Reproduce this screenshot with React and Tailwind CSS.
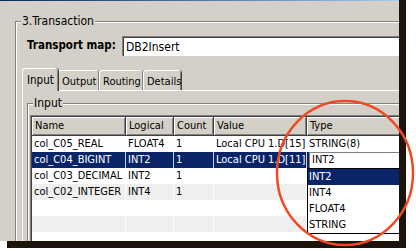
const font = "font-['DejaVu_Sans_Condensed','Liberation_Sans',sans-serif]";

const cols = ["w-[94px]", "w-[48px]", "w-[40px]", "w-[93px]", "w-[110px]"];
const heads = ["Name", "Logical", "Count", "Value", "Type"];

const rows = [
	["col_C05_REAL", "FLOAT4", "1", "Local CPU 1.D[15]", "STRING(8)"],
	["col_C04_BIGINT", "INT2", "1", "Local CPU 1.D[11]", "combo"],
	["col_C03_DECIMAL", "INT2", "1", "", ""],
	["col_C02_INTEGER", "INT4", "1", "", ""],
	["", "", "", "", ""],
	["", "", "", "", ""],
	["", "", "", "", ""],
];

const tabs = [
	["Output", "w-[41px]"],
	["Routing", "w-[44px]"],
	["Details", "w-[38px]"],
];

function Row({ cells, index }) {
	const selected = index === 1;
	const bg = selected ? "bg-[#0a246a] text-white" : index % 2 === 1 ? "bg-[#efefef]" : "bg-white";
	return (
		<div className={`flex h-[16px] ${bg}`}>
			{cells.map((c, i) => (
				<div key={i} className={`${cols[i]} shrink-0 h-full border-r border-white/80 flex items-center pl-[2px] whitespace-nowrap overflow-hidden`}>
					{c === "combo" ? (
						<div className="h-full w-full bg-white text-black border-t border-l border-[#808080] flex items-center pl-[2px]">INT2</div>
					) : (
						c
					)}
				</div>
			))}
		</div>
	);
}

export default function App() {
	return (
		<div className={`w-[416px] h-[251px] bg-white relative overflow-hidden text-black ${font}`}>
			<div className="w-[399px] h-[241px] bg-[#d4d0c8] overflow-hidden shadow-[7px_7px_0_#1c130b,7px_0_0_#1c130b]">
				<div className="h-px bg-gradient-to-r from-[#0a246a] to-[#a6caf0]"></div>

				{/* 3.Transaction group */}
				<div className="ml-[15px] mt-[20px] w-[420px] h-[260px] border border-[#808080] shadow-[inset_1px_1px_0_#fff,1px_1px_0_#fff]">
					<div className="-mt-[8px] ml-[5px] px-px w-fit bg-[#d4d0c8] text-[12px] leading-[15px]">3.Transaction</div>

					<div className="flex items-center mt-[7px] ml-[11px]">
						<div className="w-[95px] shrink-0 font-bold text-[11.5px] whitespace-nowrap">Transport map:</div>
						<div className="h-[20px] w-[300px] shrink-0 bg-white border-t border-l border-[#808080] shadow-[inset_1px_1px_0_#404040] flex items-center pl-[3px] text-[12px]">
							DB2Insert
						</div>
					</div>

					{/* tabs */}
					<div className="flex items-end mt-[12px] ml-[6px] h-[22px] text-[11px] whitespace-nowrap">
						<div className="relative z-10 w-[36px] h-[23px] -mb-px bg-[#d4d0c8] border-l border-t border-white rounded-t-[3px] shadow-[inset_-1px_0_0_#808080,1px_0_0_#404040] pl-[4px] pt-[3px] text-[11.5px]">
							Input
						</div>
						{tabs.map(([t, w]) => (
							<div key={t} className={`${w} shrink-0 h-[20px] border-l border-t border-white rounded-t-[3px] shadow-[inset_-1px_0_0_#808080,1px_0_0_#404040] pl-[3px] pt-[3px] overflow-hidden`}>
								{t}
							</div>
						))}
					</div>

					{/* tab panel */}
					<div className="ml-[6px] h-[200px] border-t border-l border-white">
						<div className="ml-[4px] mt-[12px] h-[200px] border border-[#808080] shadow-[inset_1px_1px_0_#fff,1px_1px_0_#fff]">
							<div className="-mt-[8px] ml-[5px] px-px w-fit bg-[#d4d0c8] text-[12px] leading-[15px]">Input</div>

							<div className="ml-[2px] mt-[4px] border-t border-l border-[#808080] shadow-[inset_1px_1px_0_#404040] pt-px pl-px text-[11px]">
								<div className="relative">
									<div className="flex h-[19px]">
										{heads.map((h, i) => (
											<div key={h} className={`${cols[i]} shrink-0 h-full bg-[#d4d0c8] border-r border-b border-[#404040] shadow-[inset_1px_1px_0_#fff,inset_-1px_-1px_0_#808080] flex items-center pl-[3px]`}>
												{h}
											</div>
										))}
									</div>
									{rows.map((r, i) => (
										<Row key={i} cells={r} index={i} />
									))}

									{/* dropdown list */}
									<div className="absolute left-[275px] top-[51px] w-[110px] bg-white border border-black">
										<div className="h-[16px] bg-[#0a246a] text-white flex items-center pl-[1px]">INT2</div>
										<div className="h-[16px] flex items-center pl-[1px]">INT4</div>
										<div className="h-[16px] flex items-center pl-[1px]">FLOAT4</div>
										<div className="h-[16px] flex items-center pl-[1px]">STRING</div>
									</div>
								</div>
							</div>
						</div>
					</div>
				</div>
			</div>

			<svg className="absolute inset-0 pointer-events-none" width="416" height="251" viewBox="0 0 416 251">
				<ellipse cx="345" cy="173" rx="68" ry="72" fill="none" stroke="#f04a24" strokeWidth="2.5" />
			</svg>
		</div>
	);
}
